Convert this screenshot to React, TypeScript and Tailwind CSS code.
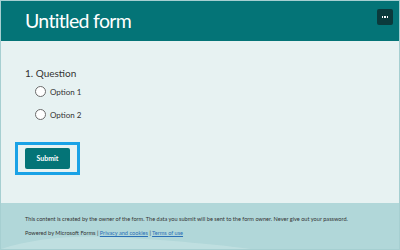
const font = { fontFamily: 'Lato, "Segoe UI", "Open Sans", sans-serif' };

function Radio({ label }: { label: string }) {
  return (
    <label className="flex h-[23px] items-center gap-[4px] pl-[10px]">
      <span className="h-[11px] w-[11px] rounded-full border border-[#6b6b6b] bg-white" />
      <span className="text-[8px] text-[#333]">{label}</span>
    </label>
  );
}

export default function App() {
  return (
    <div
      className="relative flex h-[250px] w-[400px] flex-col overflow-hidden border border-[#a6cfd1] bg-[#b1d7d9]"
      style={font}
    >
      <header className="flex h-[40px] shrink-0 items-center justify-between bg-[#047477] pl-[24px] pr-[6px]">
        <h1 className="text-[19.5px] leading-none tracking-[-0.035em] text-white">Untitled form</h1>
        <button className="flex h-[16px] w-[16px] -translate-y-[4px] items-center justify-center gap-[1px] rounded-[2px] bg-[#0b3a3c]">
          <span className="h-[1.5px] w-[1.5px] bg-white" />
          <span className="h-[1.5px] w-[1.5px] bg-white" />
          <span className="h-[1.5px] w-[1.5px] bg-white" />
        </button>
      </header>

      <main className="flex h-[162px] shrink-0 flex-col bg-[#e7f2f2] pl-[24px] pt-[25px]">
        <p className="text-[10px] leading-[14px] text-[#333]">1. Question</p>
        <Radio label="Option 1" />
        <Radio label="Option 2" />
        <div className="ml-[-10px] mt-[16px] flex h-[33px] w-[65px] items-center justify-center border-[3px] border-[#1aa2e6]">
          <button className="h-[21px] w-[45px] rounded-[2px] bg-[#047477] text-[7px] font-bold text-white">
            Submit
          </button>
        </div>
      </main>

      <footer className="relative flex flex-1 flex-col gap-[6px] pl-[24px] pt-[12px] text-[5.6px] text-[#333]">
        <svg
          className="pointer-events-none absolute inset-0 h-full w-full"
          viewBox="0 0 398 46"
          preserveAspectRatio="none"
        >
          <path d="M0 46 C 30 36, 70 32, 110 34 C 170 37, 220 42, 250 46 Z" fill="#c4e2e3" opacity="0.7" />
        </svg>
        <p className="relative">
          This content is created by the owner of the form. The data you submit will be sent to the form owner. Never
          give out your password.
        </p>
        <p className="relative">
          Powered by Microsoft Forms |{" "}
          <a className="text-[#2b6fb6] underline">Privacy and cookies</a> |{" "}
          <a className="text-[#2b6fb6] underline">Terms of use</a>
        </p>
      </footer>
    </div>
  );
}
